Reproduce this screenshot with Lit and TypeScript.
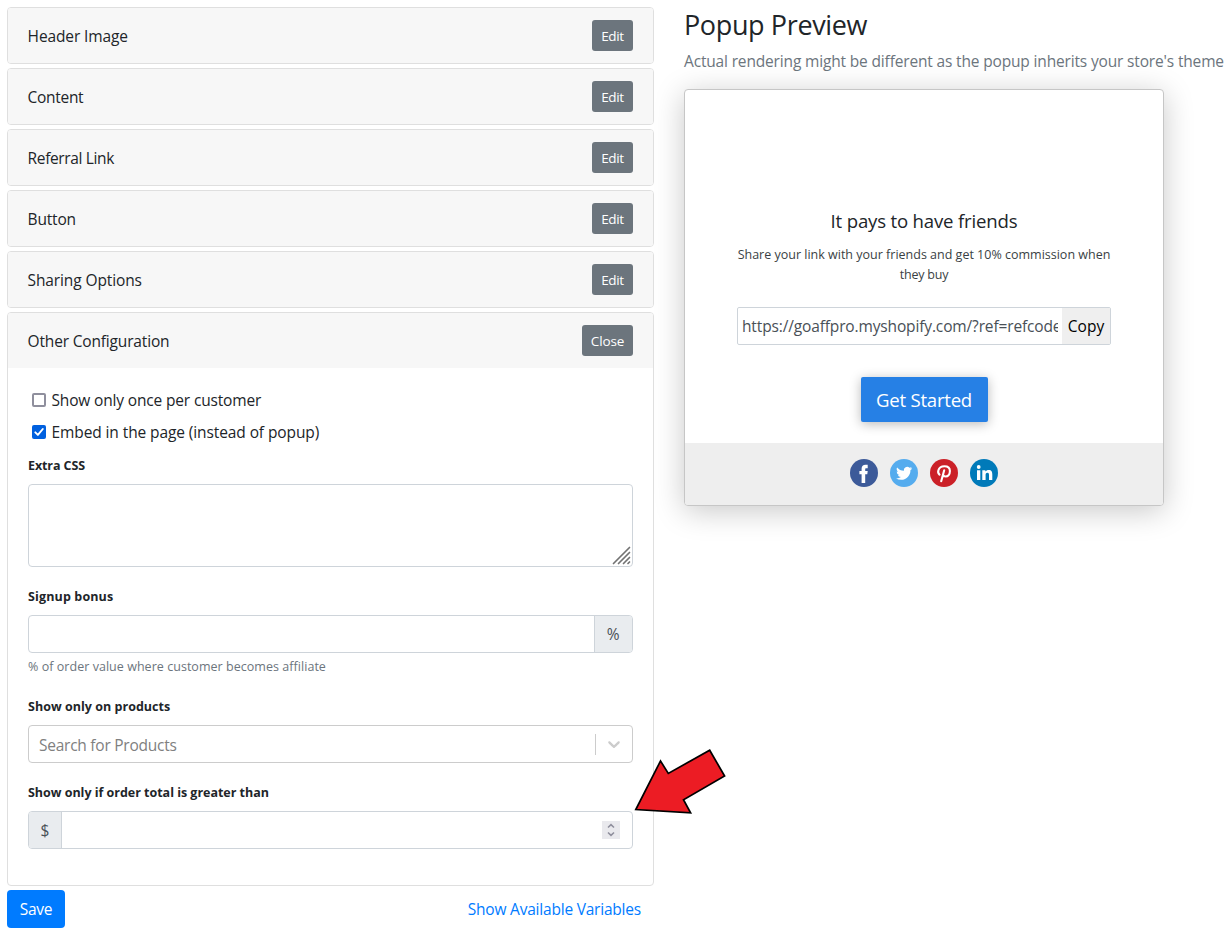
import { LitElement, html, css, svg } from "lit";
import { customElement } from "lit/decorators.js";
import { styleMap } from "lit/directives/style-map.js";

interface Section { title: string; tracking: number; }

const SECTIONS: Section[] = [
  { title: "Header Image", tracking: -0.12 },
  { title: "Content", tracking: -0.3 },
  { title: "Referral Link", tracking: -0.36 },
  { title: "Button", tracking: -0.18 },
  { title: "Sharing Options", tracking: -0.12 },
];

const track = (n: number) => styleMap({ letterSpacing: `${n}px` });

const SOCIAL = [
  { color: "#3c5a99", glyph: svg`<path fill="#fff" transform="translate(-.5 0)" d="M12.1 24V15.300H9.900V11.900H12.100V9.700C12.100 7.200 13.600 5.700 16 5.700H18.200V9.200H16.800C15.900 9.200 15.700 9.600 15.700 10.300V11.900H18.200L17.800 15.300H15.700V24Z"/>` },
  { color: "#55acee", glyph: svg`<path fill="#fff" transform="translate(6 6.300) scale(.67)" d="M23.953 4.570a10 10 0 01-2.825.775 4.958 4.958 0 002.163-2.723c-.951.555-2.005.959-3.127 1.184a4.920 4.920 0 00-8.384 4.482C7.690 8.095 4.067 6.130 1.640 3.162a4.822 4.822 0 00-.666 2.475c0 1.710.870 3.213 2.188 4.096a4.904 4.904 0 01-2.228-.616v.060a4.923 4.923 0 003.946 4.827 4.996 4.996 0 01-2.212.085 4.936 4.936 0 004.604 3.417 9.867 9.867 0 01-6.102 2.105c-.390 0-.779-.023-1.170-.067a13.995 13.995 0 007.557 2.209c9.053 0 13.998-7.496 13.998-13.985 0-.210 0-.420-.015-.630A9.935 9.935 0 0024 4.590z"/>` },
  { color: "#cb2027", glyph: svg`<path fill="none" stroke="#fff" stroke-width="2.100" stroke-linecap="round" stroke-linejoin="round" d="M9.500 15.600C8.100 14.500 7.900 12.900 8.400 11.300C9.200 8.700 11.600 7.300 14.400 7.300C17.700 7.300 19.900 9.200 19.900 12.100C19.900 15.300 18 17.500 15.700 17.500C14.400 17.500 13.400 16.800 13.200 15.900M14.200 11.200L11.200 22.200"/>` },
  { color: "#007ab9", glyph: svg`<circle fill="#fff" cx="8.700" cy="8" r="1.900"/><path fill="#fff" d="M7 11.200H10.300V21.100H7ZM12.300 11.200H15.400V12.600C16 11.600 17.200 10.900 18.700 10.900C21.600 10.900 22.300 12.800 22.300 15.600V21.100H19V16.200C19 14.900 18.900 13.700 17.400 13.700C15.900 13.700 15.600 14.800 15.600 16.100V21.100H12.300Z"/>` },
];

@customElement("config-panel")
class ConfigPanel extends LitElement {
  static styles = css`
    :host { display: block; }
    * { box-sizing: border-box; }
    .stack { display: flex; flex-direction: column; gap: 4px; }
    .card { border: 1px solid #dfdfdf; border-radius: 4px; background: #fff; overflow: hidden; }
    .card-head { display: flex; align-items: center; justify-content: space-between; height: 55px; padding: 0 20px 0 19.6px; background: #f7f7f7; font-size: 15.5px; }
    .btn { height: 31px; padding: 0; width: 41px; text-align: center; border-radius: 3px; background: #6c757d; color: #fff; font-size: 13.5px; line-height: 32px; letter-spacing: -.35px; }
    .btn.wide { width: 51px; letter-spacing: -.12px; }
    .body { height: 517px; padding: 20px; font-size: 15.5px; }
    .check { display: flex; align-items: center; height: 24px; margin-bottom: 8px; padding-left: 4px; gap: 5.5px; letter-spacing: -.16px; }
    .check.tight { letter-spacing: -.1px; }
    .check svg { flex: none; }
    .label { height: 18px; line-height: 20px; font-size: 12.5px; font-weight: 700; }
    .extra { margin-top: 12px; }
    .area { height: 83px; margin: 10px 0 20px; border: 1px solid #ced4da; border-radius: 4px; display: flex; align-items: flex-end; justify-content: flex-end; }
    .field { display: flex; height: 38px; border: 1px solid #ced4da; border-radius: 4px; overflow: hidden; }
    .bonus { margin-top: 10px; }
    .grow { flex: 1; }
    .addon { width: 38.5px; background: #e9ecef; color: #495057; border-left: 1px solid #ced4da; text-align: center; line-height: 37px; }
    .addon.left { width: 33px; border-left: 0; border-right: 1px solid #ced4da; }
    .hint { height: 20px; line-height: 20px; margin: 4px 0 20px; color: #6c757d; font-size: 12.5px; letter-spacing: .04px; }
    .select { margin: 10px 0 20px; border-color: #ccc; align-items: center; }
    .placeholder { flex: 1; padding: 2px 0 0 10px; color: #808080; letter-spacing: -.25px; }
    .sep { width: 1px; height: 21px; background: #ccc; }
    .chev { width: 36px; height: 20px; display: flex; align-items: center; justify-content: center; }
    .total { margin-top: 10px; align-items: stretch; }
    .spin { align-self: center; width: 18px; height: 18px; margin-right: 12px; background: #e9e9ed; }
    .foot { display: flex; align-items: center; justify-content: space-between; padding-right: 13px; margin-top: 4px; font-size: 15.5px; letter-spacing: -.21px; }
    .save { width: 58px; height: 38px; border-radius: 4px; background: #007bff; color: #fff; text-align: center; line-height: 39px; }
    .link { color: #007bff; }
  `;
  render() {
    return html`
      <div class="stack">
        ${SECTIONS.map((s) => html`
          <div class="card"><div class="card-head">
            <span class="title" style=${track(s.tracking)}>${s.title}</span><span class="btn">Edit</span>
          </div></div>`)}
        <div class="card">
          <div class="card-head"><span class="title" style=${track(-0.17)}>Other Configuration</span><span class="btn wide">Close</span></div>
          <div class="body">
            <div class="check">
              <svg width="14" height="14"><rect x="1" y="1" width="12" height="12" rx="1" fill="#fff" stroke="#8f8f9d" stroke-width="2"/></svg>
              <span>Show only once per customer</span>
            </div>
            <div class="check tight">
              <svg width="14" height="14"><rect width="14" height="14" rx="2" fill="#0060df"/><path d="M3.300 7.300L5.900 9.900L10.800 4" fill="none" stroke="#fff" stroke-width="1.900" stroke-linecap="round" stroke-linejoin="round"/></svg>
              <span>Embed in the page (instead of popup)</span>
            </div>
            <div class="label extra" style=${track(-0.1)}>Extra CSS</div>
            <div class="area"><svg width="20" height="20" viewBox="0 0 20 20"><path d="M1.500 17.500L17.500 1.500M6.500 17.500L17.500 6.500M11.500 17.500L17.500 11.500M16 17.500L17.500 16" fill="none" stroke="#737373" stroke-width="1.700" stroke-linecap="round"/></svg></div>
            <div class="label" style=${track(0.14)}>Signup bonus</div>
            <div class="field bonus"><div class="grow"></div><div class="addon">%</div></div>
            <div class="hint">% of order value where customer becomes affiliate</div>
            <div class="label" style=${track(0.03)}>Show only on products</div>
            <div class="field select">
              <div class="placeholder">Search for Products</div><div class="sep"></div>
              <div class="chev"><svg width="20" height="20" viewBox="0 0 20 20" fill="#ccc"><path d="M4.516 7.548c.436-.446 1.043-.481 1.576 0L10 11.295l3.908-3.747c.533-.481 1.141-.446 1.574 0 .436.445.408 1.197 0 1.615-.406.418-4.695 4.502-4.695 4.502-.217.223-.502.335-.787.335s-.570-.112-.789-.335c0 0-4.287-4.084-4.695-4.502s-.436-1.170 0-1.615z"/></svg></div>
            </div>
            <div class="label" style=${track(-0.02)}>Show only if order total is greater than</div>
            <div class="field total">
              <div class="addon left">$</div><div class="grow"></div>
              <svg class="spin" viewBox="0 0 18 18"><path d="M6 6.500L9 3.700L12 6.500M6 11.500L9 14.300L12 11.500" fill="none" stroke="#8f8f9d" stroke-width="1.600"/></svg>
            </div>
          </div>
        </div>
      </div>
      <div class="foot"><span class="save">Save</span><span class="link">Show Available Variables</span></div>
    `;
  }
}

@customElement("popup-preview")
class PopupPreview extends LitElement {
  static styles = css`
    :host { display: block; }
    * { box-sizing: border-box; }
    h3 { margin: 0; height: 34px; line-height: 34px; font-size: 27px; font-weight: 400; letter-spacing: -.37px; white-space: nowrap; padding-top: 1px; }
    .sub { height: 24px; line-height: 24px; margin: 8px 0 16px; color: #6c757d; font-size: 15.5px; letter-spacing: -.16px; white-space: nowrap; }
    .popup { width: 480px; height: 417px; border: 1px solid #c6c6c6; border-radius: 4px; background: #fff; box-shadow: 0 5px 30px rgba(0,0,0,.22); overflow: hidden; display: flex; flex-direction: column; }
    .main { flex: 1; display: flex; flex-direction: column; align-items: center; padding: 119px 52px 0; }
    .head { height: 24px; line-height: 24px; font-size: 18.6px; letter-spacing: -.18px; white-space: nowrap; }
    .text { margin-top: 12px; width: 374px; text-align: center; font-size: 12.5px; line-height: 20px; color: #3a3f44; white-space: nowrap; }
    .last { letter-spacing: -.2px; }
    .url { display: flex; width: 374px; height: 38px; margin-top: 22px; border: 1px solid #ced4da; border-radius: 2px; font-size: 15.5px; line-height: 37px; }
    .value { width: 316px; margin: 0 4px; overflow: hidden; white-space: nowrap; color: #495057; letter-spacing: -.14px; }
    .copy { flex: 1; background: #efefef; color: #000; text-align: center; }
    .cta { margin-top: 32px; width: 127px; height: 45px; line-height: 46px; border-radius: 2px; background: #2680e5; color: #fff; font-size: 18.600px; letter-spacing: -.24px; text-align: center; box-shadow: 0 2px 12px rgba(0,0,0,.28); }
    .bar { height: 62px; background: #eee; display: flex; justify-content: center; gap: 12px; padding-top: 16px; }
  `;
  render() {
    return html`
      <h3>Popup Preview</h3>
      <div class="sub">Actual rendering might be different as the popup inherits your store's theme</div>
      <div class="popup">
        <div class="main">
          <div class="head">It pays to have friends</div>
          <div class="text">Share your link with your friends and get 10% commission when<br /><span class="last">they buy</span></div>
          <div class="url"><div class="value">https://goaffpro.myshopify.com/?ref=refcode</div><div class="copy">Copy</div></div>
          <div class="cta">Get Started</div>
        </div>
        <div class="bar">
          ${SOCIAL.map((s) => html`<svg width="28" height="28" viewBox="0 0 28 28"><circle cx="14" cy="14" r="14" fill=${s.color}/>${s.glyph}</svg>`)}
        </div>
      </div>
    `;
  }
}

@customElement("app-root")
class AppRoot extends LitElement {
  static styles = css`
    :host { display: block; position: relative; width: 1227px; height: 932px; overflow: hidden; background: #fff; color: #212529; font-family: "Open Sans", "Noto Sans", sans-serif; }
    .page { display: grid; grid-template-columns: 647px 543px; column-gap: 30px; padding: 7px 0 0 7px; align-items: start; }
    .arrow { position: absolute; left: 630px; top: 744px; }
  `;
  render() {
    return html`
      <div class="page"><config-panel></config-panel><popup-preview></popup-preview></div>
      <svg class="arrow" width="102" height="76" viewBox="630 744 102 76"><path d="M635.800 809.500L660.500 761L668.300 773.400L709.700 750.200L724.600 776L683.500 799.700L690.600 812.800Z" fill="#ec1c24" stroke="#000" stroke-width="1.700"/></svg>
    `;
  }
}
